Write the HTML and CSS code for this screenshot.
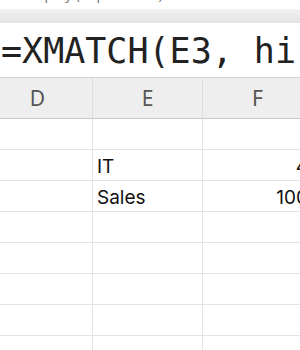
FILE: index.html
```html
<!DOCTYPE html>
<html lang="en">
<head>
    <meta charset="UTF-8">
    <meta name="viewport" content="width=device-width, initial-scale=1.0">
    <title>XMATCH</title>
    <link rel="stylesheet" href="styles.css">
</head>
<body>
    <div class="caption"><span>Lookup by (department)</span></div>
    <div class="toolbar"></div>

    <div class="formula">=XMATCH(E3, hi</div>

    <div class="sheet">
        <div class="head">D</div>
        <div class="head">E</div>
        <div class="head">F</div>

        <div class="cell"></div><div class="cell"></div><div class="cell"></div>
        <div class="cell"></div><div class="cell">IT</div><div class="cell num">4</div>
        <div class="cell"></div><div class="cell">Sales</div><div class="cell num">100</div>
        <div class="cell"></div><div class="cell"></div><div class="cell"></div>
        <div class="cell"></div><div class="cell"></div><div class="cell"></div>
        <div class="cell"></div><div class="cell"></div><div class="cell"></div>
        <div class="cell"></div><div class="cell"></div><div class="cell"></div>
        <div class="cell"></div><div class="cell"></div><div class="cell"></div>
    </div>
</body>
</html>
```

FILE: styles.css
```css
body {
    margin: 0;
    width: 300px;
    height: 350px;
    overflow: hidden;
    background-color: #ffffff;
    font-family: 'Noto Sans', sans-serif;
}
.caption {
    height: 9px;
    overflow: hidden;
    position: relative;
}
.caption span {
    position: absolute;
    left: 4px;
    top: -16px;
    font-size: 14px;
    color: #777777;
    white-space: nowrap;
}
.toolbar {
    height: 14px;
    background: linear-gradient(#f2f2f2, #e4e4e4);
}
.formula {
    height: 54px;
    line-height: 56px;
    padding-left: 1px;
    font-family: 'DejaVu Sans Mono', monospace;
    font-size: 35px;
    color: #222222;
    white-space: nowrap;
    overflow: hidden;
    border-bottom: 1px solid #d4d4d4;
}
.sheet {
    display: grid;
    grid-template-columns: 110px 110px 110px;
    grid-auto-rows: 31px;
    grid-template-rows: 41px;
    margin-left: -17px;
}
.head {
    background-color: #eeeeee;
    border-right: 1px solid #dddddd;
    border-bottom: 1px solid #c9c9c9;
    color: #555555;
    font-size: 21px;
    display: flex;
    align-items: center;
    justify-content: center;
}
.cell {
    border-right: 1px solid #e4e4e4;
    border-bottom: 1px solid #e4e4e4;
    font-family: 'Inter', sans-serif;
    font-size: 19px;
    color: #111111;
    padding: 0 4px;
    line-height: 34px;
    white-space: nowrap;
}
.num {
    text-align: right;
}
```
